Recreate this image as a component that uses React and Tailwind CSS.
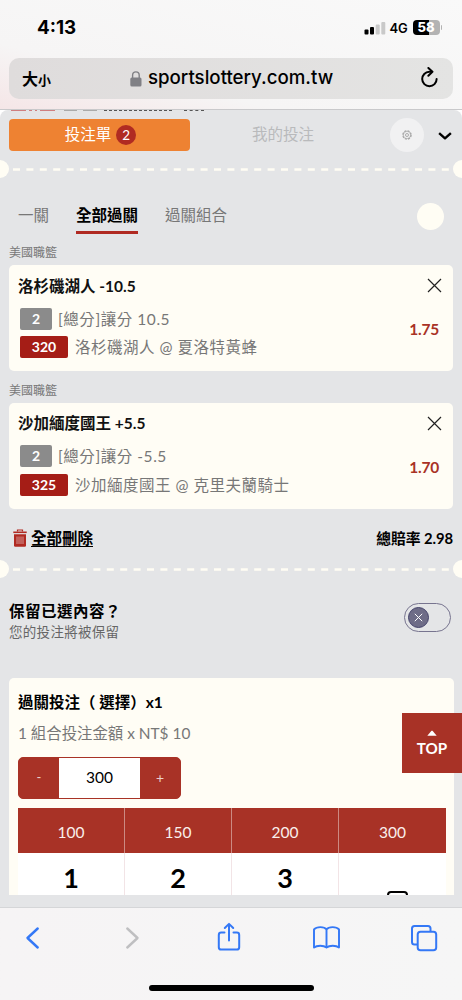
import React, { useState } from "react";
import clsx from "clsx";

const bets = [
  {
    league: "美國職籃",
    title: "洛杉磯湖人 -10.5",
    count: "2",
    market: "[總分]讓分 10.5",
    code: "320",
    match: "洛杉磯湖人 @ 夏洛特黃蜂",
    odds: "1.75",
  },
  {
    league: "美國職籃",
    title: "沙加緬度國王 +5.5",
    count: "2",
    market: "[總分]讓分 -5.5",
    code: "325",
    match: "沙加緬度國王 @ 克里夫蘭騎士",
    odds: "1.70",
  },
];

const tabs = ["一關", "全部過關", "過關組合"];
const amounts = ["100", "150", "200", "300"];

function StatusBar() {
  return (
    <div className="flex h-[58px] items-center justify-between pl-[37px] pr-[20px]">
      <span className="-mt-[2px] text-[18.8px] font-bold leading-[20px]">4:13</span>
      <div className="-mt-[3px] flex items-center">
        <svg width="22" height="14" viewBox="0 0 22 14">
          <rect x="0.5" y="8.5" width="4" height="5" rx="1" fill="#000" />
          <rect x="6" y="6" width="4" height="7.5" rx="1" fill="#000" />
          <rect x="11.7" y="3.5" width="4" height="10" rx="1" fill="#c9c9c9" />
          <rect x="17.3" y="1" width="4" height="12.5" rx="1" fill="#c9c9c9" />
        </svg>
        <span className="ml-[4px] w-[19px] text-[13px] font-semibold leading-4 tracking-[-0.2px]">4G</span>
        <div className="ml-[4px] flex h-[15px] w-[27px] items-center justify-center rounded-[4px] bg-linear-to-r from-black from-58% to-[#b3b3b3] to-58% text-[13px] font-extrabold leading-none text-white">
          58
        </div>
        <div className="ml-px h-[5px] w-[1.5px] rounded-r-full bg-[#b3b3b3]" />
      </div>
    </div>
  );
}

function AddressBar() {
  return (
    <div className="mx-[9px] flex h-[41px] items-center rounded-[10px] bg-linear-to-r from-[#dfdcdc] to-[#e4e4e3] pl-[13px] pr-[14px]">
      <div className="flex w-[108px] items-baseline font-bold leading-none">
        <span className="text-[16px]">大</span>
        <span className="text-[13px]">小</span>
      </div>
      <svg width="12" height="16" viewBox="0 0 12 16" fill="none">
        <rect x="0.3" y="6.5" width="11.2" height="9" rx="1.5" fill="#808085" />
        <path d="M2.6 7V4.2a3.3 3.3 0 0 1 6.6 0V7" stroke="#808085" strokeWidth="1.4" />
      </svg>
      <span className="ml-[6px] flex-1 whitespace-nowrap text-[18.7px] font-medium leading-none tracking-[-0.01px]">
        sportslottery.com.tw
      </span>
      <svg className="-mt-[3px]" width="19" height="21" viewBox="0 0 20 22" fill="none" stroke="#000" strokeWidth="2.1" strokeLinecap="round" strokeLinejoin="round">
        <path d="M11.5 5H9.8a7.6 7.6 0 1 0 7.700 7.600" />
        <path d="M8.800 1l4.300 4-4.300 4.100" />
      </svg>
    </div>
  );
}

function Perforation() {
  return (
    <div className="flex h-[18px] items-center justify-between overflow-hidden">
      <div className="-ml-[9px] h-[18px] w-[18px] shrink-0 rounded-full bg-[#fffdf4]" />
      <svg className="mt-[1px] shrink-0" width="436" height="3" viewBox="0 0 436 3">
        <path d="M0 1.5H436" stroke="#fffdf4" strokeWidth="2.5" strokeDasharray="7 6.4" />
      </svg>
      <div className="-mr-[9px] h-[18px] w-[18px] shrink-0 rounded-full bg-[#fffdf4]" />
    </div>
  );
}

function BetCard({ bet }) {
  return (
    <div className="h-[137.5px]">
      <p className="h-[20px] text-[12px] leading-[22px] text-[#777]">{bet.league}</p>
      <div className="mt-[3.4px] flex h-[106px] justify-between rounded-[5px] bg-[#fffdf5] pl-[9px] pr-[11px]">
        <div>
          <h3 className="mt-[8.500px] h-[24px] whitespace-nowrap text-[15.5px] font-bold leading-[24px] text-[#111]">
            {bet.title}
          </h3>
          <div className="ml-[2px] mt-[10px] flex h-[22px] items-center">
            <span className="w-[32px] rounded-[2px] bg-[#8b8b8b] text-center text-[14px] font-bold leading-[22px] text-white">
              {bet.count}
            </span>
            <span className="ml-[6px] whitespace-nowrap text-[15.5px] leading-[22px] tracking-[0.55px] text-[#777]">
              {bet.market}
            </span>
          </div>
          <div className="ml-[2px] mt-[6.600px] flex h-[22px] items-center">
            <span className="w-[48px] rounded-[2px] bg-[#a51d16] text-center text-[14px] font-bold leading-[22px] text-white">
              {bet.code}
            </span>
            <span className="ml-[7px] whitespace-nowrap text-[15.5px] leading-[22px] tracking-[0.5px] text-[#777]">
              {bet.match}
            </span>
          </div>
        </div>
        <div className="flex flex-col items-end">
          <svg className="mt-[13px]" width="15" height="15" viewBox="0 0 15 15" stroke="#222" strokeWidth="1.2">
            <path d="M1 1l13 13M14 1L1 14" />
          </svg>
          <span className="mr-[3px] mt-[26px] text-[15.5px] font-bold leading-[20px] tracking-[-0.25px] text-[#a93226]">
            {bet.odds}
          </span>
        </div>
      </div>
    </div>
  );
}

function BrowserToolbar() {
  return (
    <div className="h-[93px] border-t border-[#d5d6d8] bg-linear-to-r from-[#f6f4f5] to-[#f6f6f6]">
      <div className="flex h-[60px] items-center pl-[25px]">
        <svg width="15" height="24" viewBox="0 0 15 24" fill="none" stroke="#3478f6" strokeWidth="2.4" strokeLinecap="round" strokeLinejoin="round">
          <path d="M12.7 2.5L2.5 12l10.2 9.5" />
        </svg>
        <svg className="ml-[85px]" width="15" height="24" viewBox="0 0 15 24" fill="none" stroke="#bfbfc1" strokeWidth="2.4" strokeLinecap="round" strokeLinejoin="round">
          <path d="M2.3 2.5L12.5 12 2.3 21.5" />
        </svg>
        <svg className="-mt-[2px] ml-[75.500px]" width="26" height="30" viewBox="0 0 26 30" fill="none" stroke="#3478f6" strokeWidth="2" strokeLinecap="round" strokeLinejoin="round">
          <path d="M8.5 10.5H5.2a2.4 2.4 0 0 0-2.4 2.4v12.3a2.4 2.4 0 0 0 2.4 2.4h15.6a2.4 2.4 0 0 0 2.4-2.4V12.9a2.4 2.4 0 0 0-2.4-2.4h-3.3" />
          <path d="M13 18.5V2M8.8 6L13 1.9 17.2 6" />
        </svg>
        <svg className="-mt-[1px] ml-[70px]" width="29" height="25" viewBox="0 0 29 26" fill="none" stroke="#3478f6" strokeWidth="2" strokeLinejoin="round">
          <path d="M14.5 4.600C12.200 1.400 4.200 1.400 1.500 4.600v18.800c3-2.500 10-2.500 13 0 3-2.500 10-2.500 13 0V4.600C24.800 1.400 16.800 1.400 14.500 4.600zM14.500 4.600v18.800" />
        </svg>
        <svg className="ml-[69px] -mt-[1px]" width="28" height="28" viewBox="0 0 28 28" fill="none" stroke="#3478f6" strokeWidth="2">
          <path d="M7 20.5H4.5a2.5 2.5 0 0 1-2.5-2.5V4.5A2.5 2.5 0 0 1 4.5 2H18a2.5 2.5 0 0 1 2.5 2.5V7.500" />
          <rect x="7.7" y="7.7" width="18.5" height="18.5" rx="2.8" />
        </svg>
      </div>
      <div className="mx-auto mt-[17px] h-[6px] w-[165px] rounded-full bg-black" />
    </div>
  );
}

function App() {
  const [activeTab, setActiveTab] = useState(1);
  const [stake, setStake] = useState(300);

  return (
    <div className="relative flex h-[1000px] w-[462px] flex-col overflow-hidden bg-[#e4e5e7] font-['Lato','Noto_Sans_CJK_TC',sans-serif] text-black">
      <header className="h-[110px] border-b border-[#c9c9cb] bg-linear-to-tr from-[#f5e6e7] via-[#f6f5f5] via-30% to-[#f9f9f9] font-['Inter','Noto_Sans_CJK_TC',sans-serif]">
        <StatusBar />
        <AddressBar />
      </header>

      <div className="bg-white">
        <div className="flex h-[50px] items-start rounded-t-[8px] bg-[#e4e5e7] pl-[9px] pr-[10px] pt-[9px]">
          <button className="flex h-[32px] w-[181px] items-center justify-center gap-[5px] rounded-[4px] bg-[#ee8232] pl-[2px] text-[15.5px] text-white">
            投注單
            <span className="flex h-[20px] w-[20px] items-center justify-center rounded-full bg-[#b02b22] text-[13.5px]">
              2
            </span>
          </button>
          <button className="ml-[62px] h-[32px] text-[15.5px] text-[#b9babc]">我的投注</button>
          <div className="ml-auto mt-[-1px] flex h-[34px] items-center">
            <div className="flex h-[34px] w-[34px] items-center justify-center rounded-full bg-[#f1f1f2]">
              <svg width="10" height="10" viewBox="0 0 10 10" fill="none" stroke="#a5a5a5">
                <circle cx="5" cy="5" r="4.1" strokeDasharray="2.1 1.12" strokeWidth="1.3" />
                <circle cx="5" cy="5" r="3.6" strokeWidth="0.6" />
                <circle cx="5" cy="5" r="1.5" strokeWidth="0.9" />
              </svg>
            </div>
            <svg className="ml-[14px] mt-[2px]" width="14" height="10" viewBox="0 0 15 10" fill="none" stroke="#000" strokeWidth="2.6" strokeLinejoin="round">
              <path d="M1.2 2l6.3 5.5L13.800 2" />
            </svg>
          </div>
        </div>
      </div>

      <Perforation />

      <nav className="flex h-[64px] items-start pl-[18px] pr-[18px] pt-[25px]">
        {tabs.map((tab, i) => (
          <button
            key={tab}
            onClick={() => setActiveTab(i)}
            className={clsx(
              "mr-[27px] h-[31px] border-b-[3px] pb-[5px] text-[15.5px] leading-[24px]",
              activeTab === i ? "border-[#b02a22] font-bold text-black" : "border-transparent text-[#777]"
            )}
          >
            {tab}
          </button>
        ))}
        <span className="ml-auto h-[27px] w-[27px] rounded-full bg-[#fffdf4]" />
      </nav>

      <section className="px-[9px]">
        {bets.map((bet) => (
          <BetCard key={bet.code} bet={bet} />
        ))}
      </section>

      <div className="flex h-[43px] items-center justify-between pb-[2px] pl-[13px] pr-[9px]">
        <button className="flex items-center gap-[4px] text-[15.5px] font-bold leading-[24px]">
          <svg width="14" height="18" viewBox="0 0 14 18" fill="none" stroke="#b02a22">
            <path d="M4.5 2.5V1h5v1.5" strokeWidth="1.2" />
            <path d="M0.3 3.3h13.4" strokeWidth="1.6" />
            <path d="M1 5.2h12v11.3a1.3 1.3 0 0 1-1.3 1.3H2.3A1.3 1.3 0 0 1 1 16.5z" fill="#b02a22" stroke="none" />
            <path d="M4 7.5V15M6 7.500V15M8 7.500V15M10 7.500V15" stroke="#e4c4c4" strokeWidth="0.7" />
          </svg>
          <span className="underline decoration-1 underline-offset-2">全部刪除</span>
        </button>
        <span className="text-[14.8px] font-bold leading-[24px] tracking-[-0.05px]">總賠率 2.98</span>
      </div>

      <Perforation />

      <div className="flex h-[100px] justify-between pl-[9px] pr-[11px] pt-[21px]">
        <div>
          <p className="text-[15.5px] font-bold leading-[24px] tracking-[0.5px]">保留已選內容？</p>
          <p className="text-[13.5px] leading-[18px] tracking-[0.3px] text-[#666]">您的投注將被保留</p>
        </div>
        <div className="mt-[4px] flex h-[29px] w-[47px] items-center rounded-full border border-[#77748f] pl-[3px]">
          <span className="flex h-[21px] w-[21px] items-center justify-center rounded-full border border-[#44426a] bg-[#6e6c87]">
            <svg width="9" height="9" viewBox="0 0 9 9" stroke="#fff" strokeWidth="1">
              <path d="M0.8 0.8l7.4 7.4M8.2 0.8L0.8 8.2" />
            </svg>
          </span>
        </div>
      </div>

      <section className="ml-[9px] h-[217px] w-[445px] overflow-hidden rounded-t-[5px] bg-[#fffdf5] px-[9px] pt-[12px]">
        <h3 className="whitespace-nowrap text-[15.5px] font-bold leading-[24px]">過關投注（ 選擇）x1</h3>
        <p className="mt-[7px] whitespace-nowrap text-[15.4px] leading-[24px] text-[#777]">1 組合投注金額 x NT$ 10</p>
        <div className="mt-[12px] flex h-[42px] w-[163px] overflow-hidden rounded-[5px] border border-[#a83226] bg-[#a83226] text-[15.5px]">
          <button onClick={() => setStake(stake - 10)} className="w-[40px] text-[13px] text-[#e8cfcb]">
            -
          </button>
          <span className="flex w-[81px] items-center justify-center bg-white">{stake}</span>
          <button onClick={() => setStake(stake + 10)} className="w-[40px] pb-[2px] text-[14px] text-[#e8cfcb]">
            +
          </button>
        </div>
        <div className="mt-[9px] grid w-[428px] grid-cols-4 bg-white">
          {amounts.map((amount) => (
            <button
              key={amount}
              onClick={() => setStake(Number(amount))}
              className="h-[45px] border-r border-[#cc8a82] bg-[#a83226] pt-[4px] text-[15.5px] text-[#faefed] last:border-r-0 nth-4:border-r-0"
            >
              {amount}
            </button>
          ))}
          {["1", "2", "3"].map((n) => (
            <button key={n} className="h-[55px] border-r border-[#f2e4e6] pb-[5px] text-[27px] font-bold leading-[50px]">
              {n}
            </button>
          ))}
          <button className="flex h-[55px] justify-center pl-[9px] pt-[38px]">
            <span className="h-[16px] w-[21px] rounded-[4px] border-2 border-black" />
          </button>
        </div>
      </section>

      <div className="h-[12px] shrink-0" />
      <BrowserToolbar />

      <button className="absolute right-0 top-[713px] flex h-[60px] w-[60px] flex-col items-center bg-[#a83226] pt-[17px] text-white">
        <svg width="10" height="6" viewBox="0 0 10 6" fill="#fff">
          <path d="M0.3 5.8L4.5 0.7h1L9.7 5.8z" />
        </svg>
        <span className="mt-[2px] text-[15.2px] font-bold leading-[20px]">TOP</span>
      </button>

      {/* page content peeking out under the address bar */}
      <div className="absolute left-[11px] top-[110px] flex h-[1px] items-center gap-[3px]">
        <span className="h-[1px] w-[15px] bg-[#cf7f81]" />
        <span className="h-[1px] w-[3px] bg-[#cf7f81]" />
        <span className="h-[1px] w-[2px] bg-[#cf7f81]" />
        <span className="h-[1px] w-[15px] bg-[#cf7f81]" />
        <span className="ml-[6px] h-[1px] w-[13px] bg-[#aaa]" />
        <span className="ml-[3px] h-[1px] w-[14px] bg-[#aaa]" />
        <span className="ml-[4px] w-[68px] border-t border-dashed border-[#555]" />
        <span className="ml-[9px] w-[20px] border-t border-dashed border-[#555]" />
      </div>
    </div>
  );
}

export default App;
